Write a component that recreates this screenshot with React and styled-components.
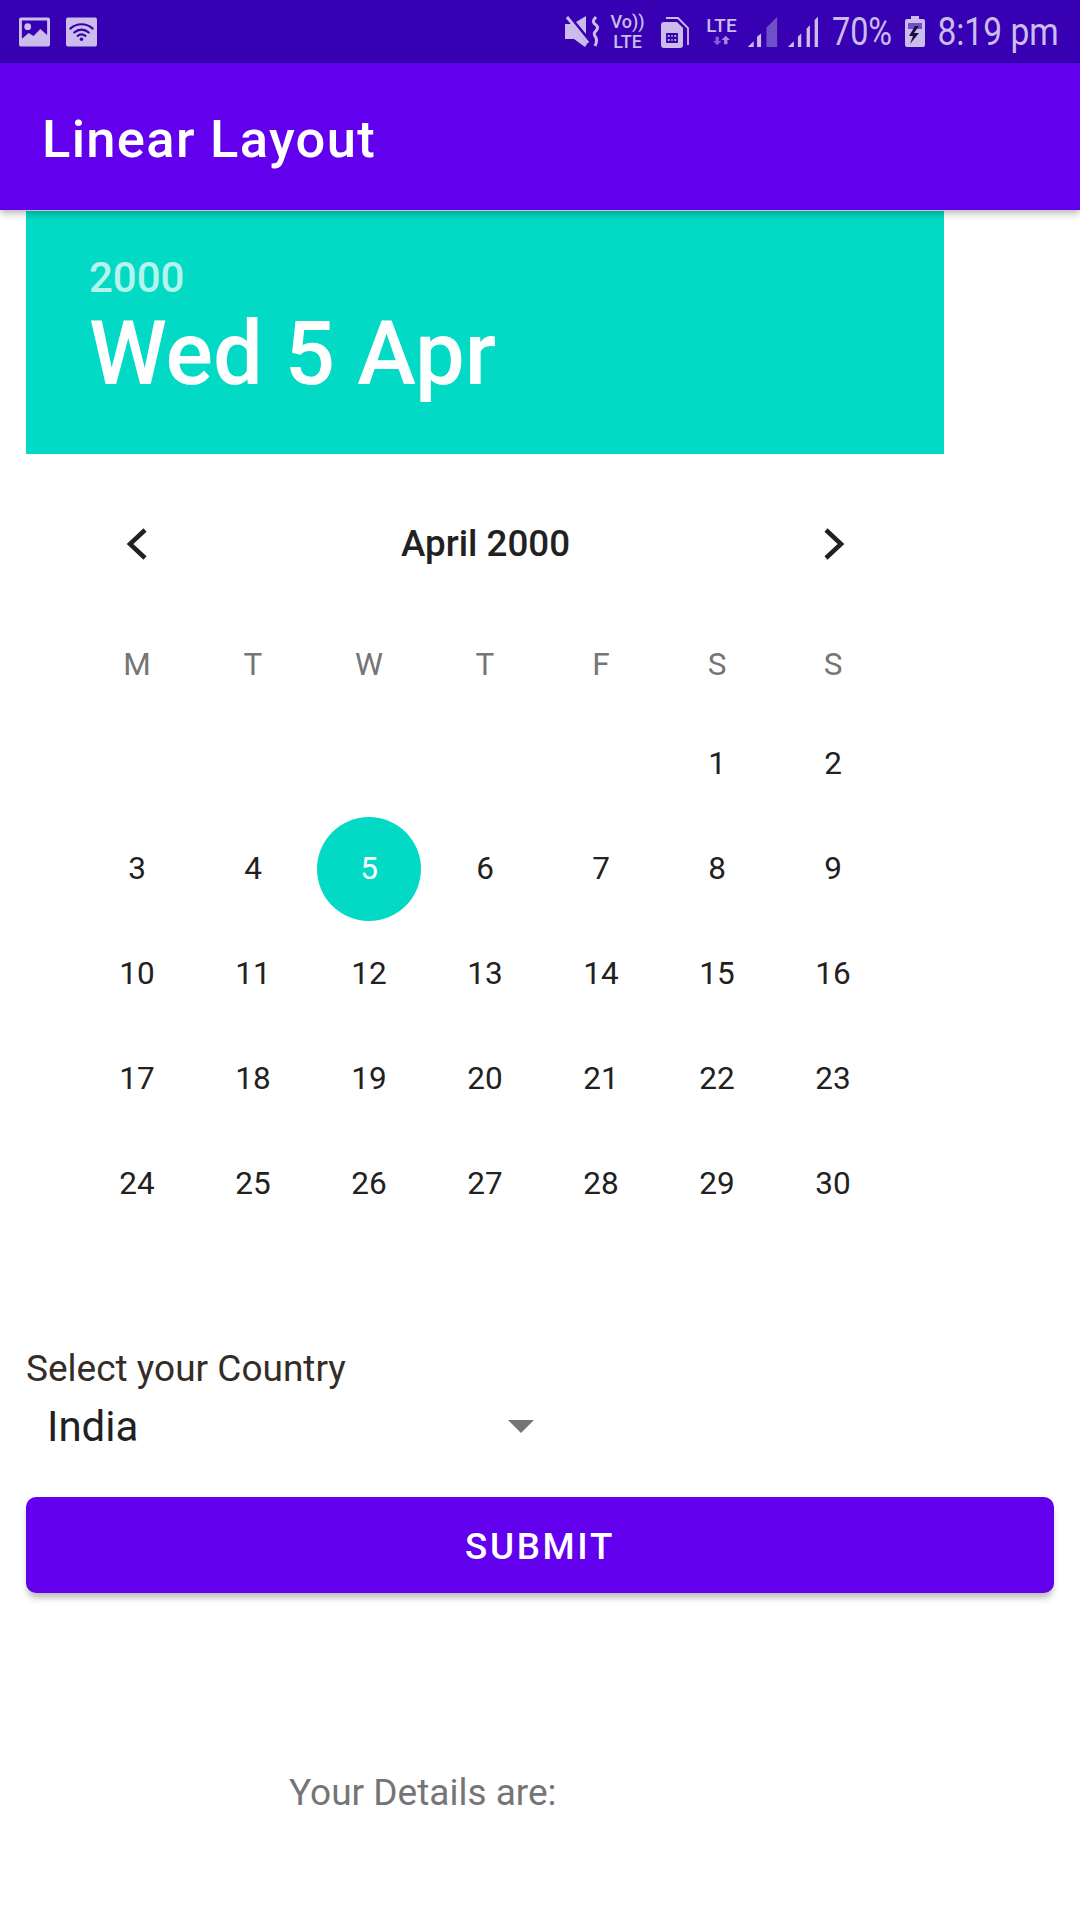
import React from "react";
import styled, { createGlobalStyle } from "styled-components";

const weekDays = ["M", "T", "W", "T", "F", "S", "S"];
const days = [null, null, null, null, null, 1, 2];
for (let d = 3; d <= 30; d++) days.push(d);

const App = () => {
  return (
    <Screen>
      <GlobalStyle />
      <StatusBar>
        <IconGroup>
          <svg width="31" height="30" viewBox="0 0 32 30">
            <path fill="#cbbcec" fillRule="evenodd" d="M2 0h28a2 2 0 0 1 2 2v26a2 2 0 0 1-2 2H2a2 2 0 0 1-2-2V2a2 2 0 0 1 2-2zM3 3v19l7-6 5 3 7-7 7 6V3z" />
            <circle cx="9" cy="9.500" r="3.500" fill="#cbbcec" />
          </svg>
          <WifiIcon viewBox="0 0 32 30">
            <rect width="32" height="30" rx="2" fill="#cbbcec" />
            <g fill="none" stroke="#3600ab" strokeWidth="2.200" strokeLinecap="round">
              <path d="M4.500 11.500C11 5.500 21 5.500 27.500 11.500" />
              <path d="M8.500 15.500C13 11.500 19 11.500 23.500 15.500" />
              <path d="M12 19C14.500 17 17.500 17 20 19" />
            </g>
            <circle cx="16" cy="22.500" r="1.800" fill="#3600ab" />
          </WifiIcon>
        </IconGroup>
        <RightGroup>
          <MuteIcon viewBox="0 0 34 32">
            <path fill="#cbbcec" d="M0 8h7l15 20-2 3-11-8H0zM11 6l10-6v18z" />
            <path fill="none" stroke="#cbbcec" strokeWidth="3" d="M2 1l21 26" />
            <path fill="none" stroke="#cbbcec" strokeWidth="3" d="M31 1c-4 4-3 6 0 8s1 5-1 7 0 4 1 6 0 6-1 8" />
          </MuteIcon>
          <VoLte>
            <span>Vo))</span>
            <span>LTE</span>
          </VoLte>
          <SimIcon viewBox="0 0 28 32">
            <path fill="#cbbcec" d="M3 6h13l6 6v17a3 3 0 0 1-3 3H3a3 3 0 0 1-3-3V9a3 3 0 0 1 3-3z" />
            <path fill="none" stroke="#cbbcec" strokeWidth="1.800" d="M5 2h12l10 10v17" />
            <path fill="none" stroke="#3600ab" strokeWidth="1.800" d="M6 18h10v8H6zM9.500 18v8M12.500 18v8M6 22h10" />
          </SimIcon>
          <LteData>
            <span>LTE</span>
            <svg width="17" height="11" viewBox="0 0 20 11">
              <path fill="#7f60cd" d="M3 1h4v5h3l-5 5-5-5h3z" />
              <path fill="#a48bdc" d="M15 0l5 5h-3v5h-4V5h-3z" />
            </svg>
          </LteData>
          <SignalIcon viewBox="20 20 215 98">
            <path fill="#cbbcec" d="M22 115l18-17v17zM50 115V85l12-10v40z" />
            <path fill="#7050c8" d="M78 115V58l32-33v90z" />
            <path fill="#cbbcec" d="M142 115l18-17v17zM172 115V85l10-10v40zM198 115V60l10-10v65zM222 115V35l10-10v90z" />
          </SignalIcon>
          <BarText $w={60} $scale={0.83}>70%</BarText>
          <BatteryIcon viewBox="0 0 20 31">
            <path fill="#cbbcec" d="M6 0h8v3h4a2 2 0 0 1 2 2v24a2 2 0 0 1-2 2H2a2 2 0 0 1-2-2V5a2 2 0 0 1 2-2h4z" />
            <path fill="#7050c8" d="M3 7h14v6H3z" />
            <path fill="#1a1040" d="M10 10l-6 10h4l-3 8 9-11H9l5-7z" />
          </BatteryIcon>
          <BarText $w={120} $scale={0.86}>8:19 pm</BarText>
        </RightGroup>
      </StatusBar>
      <AppBar>Linear Layout</AppBar>
      <Content>
        <Picker>
          <PickerHeader>
            <Year>2000</Year>
            <PickedDate>Wed 5 Apr</PickedDate>
          </PickerHeader>
          <MonthRow>
            <svg width="24" height="34" viewBox="0 0 24 34">
              <path fill="none" stroke="#212121" strokeWidth="4.500" d="M20 3L5 17l15 14" />
            </svg>
            <MonthName>April 2000</MonthName>
            <svg width="24" height="34" viewBox="0 0 24 34">
              <path fill="none" stroke="#212121" strokeWidth="4.500" d="M4 3l15 14L4 31" />
            </svg>
          </MonthRow>
          <DaysGrid>
            {weekDays.map((d, i) => (
              <WeekDay key={i}>{d}</WeekDay>
            ))}
            {days.map((d, i) => (
              <DayCell key={i}>{d && <DayNum $selected={d === 5}>{d}</DayNum>}</DayCell>
            ))}
          </DaysGrid>
        </Picker>
        <CountryLabel>Select your Country</CountryLabel>
        <SpinnerRow>
          <span>India</span>
          <Caret />
        </SpinnerRow>
        <SubmitButton>SUBMIT</SubmitButton>
        <Details>Your Details are:</Details>
      </Content>
    </Screen>
  );
};

export default App;

const GlobalStyle = createGlobalStyle`
  html, body {
    margin: 0;
    padding: 0;
    background: #fff;
  }
  * {
    box-sizing: border-box;
  }
`;

const Screen = styled.div`
  width: 1080px;
  height: 1920px;
  overflow: hidden;
  background: #fff;
  font-family: Roboto, sans-serif;
`;

const StatusBar = styled.div`
  height: 63px;
  padding: 0 22px 0 19px;
  display: flex;
  align-items: center;
  justify-content: space-between;
  background: #3700b3;
  color: #cbbcec;
`;

const IconGroup = styled.div`
  display: flex;
  align-items: center;
  gap: 16px;
`;

const RightGroup = styled.div`
  display: flex;
  align-items: center;
  gap: 13px;
`;

const WifiIcon = styled.svg`
  width: 31px;
  height: 30px;
`;

const MuteIcon = styled.svg`
  width: 34px;
  height: 32px;
`;

const VoLte = styled.div`
  width: 31px;
  display: flex;
  flex-direction: column;
  align-items: center;
  font-size: 18px;
  font-weight: 500;
  line-height: 20px;
  white-space: nowrap;
`;

const SimIcon = styled.svg`
  width: 28px;
  height: 32px;
  margin-left: 5px;
`;

const LteData = styled.div`
  width: 33px;
  margin-left: 3px;
  display: flex;
  flex-direction: column;
  align-items: center;
  font-size: 19px;
  font-weight: 500;
  line-height: 18px;
`;

const SignalIcon = styled.svg`
  width: 72px;
  height: 33px;
  margin-left: -4px;
`;

const BarText = styled.span`
  width: ${(p) => p.$w}px;
  display: flex;
  justify-content: center;
  font-size: 39px;
  white-space: nowrap;
  transform: scaleX(${(p) => p.$scale});
`;

const BatteryIcon = styled.svg`
  width: 20px;
  height: 31px;
`;

const AppBar = styled.div`
  height: 147px;
  padding: 4px 0 0 42px;
  display: flex;
  align-items: center;
  background: #6200ee;
  color: #fff;
  font-size: 52.500px;
  font-weight: 500;
  letter-spacing: 1.300px;
  position: relative;
  box-shadow: 0 3px 8px rgba(0, 0, 0, 0.3);
`;

const Content = styled.div`
  padding: 1px 26px 0;
`;

const Picker = styled.div`
  width: 918px;
`;

const PickerHeader = styled.div`
  height: 243px;
  padding: 42px 0 0 63px;
  background: #03dac5;
  color: #fff;
`;

const Year = styled.div`
  font-size: 42px;
  font-weight: 500;
  line-height: 50px;
  opacity: 0.7;
`;

const PickedDate = styled.div`
  font-size: 88.500px;
  font-weight: 500;
  line-height: 103px;
`;

const MonthRow = styled.div`
  height: 179px;
  padding: 0 98px 0 99px;
  display: flex;
  align-items: center;
  justify-content: space-between;
`;

const MonthName = styled.div`
  font-size: 36.750px;
  font-weight: 500;
  color: #212121;
`;

const DaysGrid = styled.div`
  width: 812px;
  margin-left: 53px;
  display: grid;
  grid-template-columns: repeat(7, 116px);
  grid-template-rows: 78px repeat(5, 105px);
`;

const WeekDay = styled.div`
  height: 62px;
  display: flex;
  align-items: center;
  justify-content: center;
  font-size: 31.500px;
  color: #757575;
`;

const DayCell = styled.div`
  display: flex;
  align-items: center;
  justify-content: center;
`;

const DayNum = styled.div`
  width: 104px;
  height: 104px;
  border-radius: 50%;
  display: flex;
  align-items: center;
  justify-content: center;
  font-size: 31.500px;
  color: ${(p) => (p.$selected ? "#fff" : "#212121")};
  background: ${(p) => (p.$selected ? "#03dac5" : "transparent")};
`;

const CountryLabel = styled.div`
  margin-top: 111px;
  font-size: 37px;
  line-height: 44px;
  color: #362c27;
`;

const SpinnerRow = styled.div`
  width: 525px;
  height: 60px;
  padding: 0 17px 0 21px;
  margin-top: 5px;
  display: flex;
  align-items: center;
  justify-content: space-between;
  font-size: 42px;
  color: #212121;
`;

const Caret = styled.div`
  width: 0;
  height: 0;
  border-left: 13px solid transparent;
  border-right: 13px solid transparent;
  border-top: 13px solid #757575;
`;

const SubmitButton = styled.button`
  display: block;
  width: 1028px;
  height: 96px;
  padding: 2px 0 0;
  margin-top: 41px;
  border: none;
  border-radius: 10px;
  background: #6200ee;
  color: #fff;
  font-family: Roboto, sans-serif;
  font-size: 36.750px;
  font-weight: 500;
  letter-spacing: 2.700px;
  box-shadow: 0 6px 6px -1px rgba(0, 0, 0, 0.25);
`;

const Details = styled.div`
  margin: 178px 0 0 263px;
  font-size: 37px;
  line-height: 44px;
  color: #757575;
`;
